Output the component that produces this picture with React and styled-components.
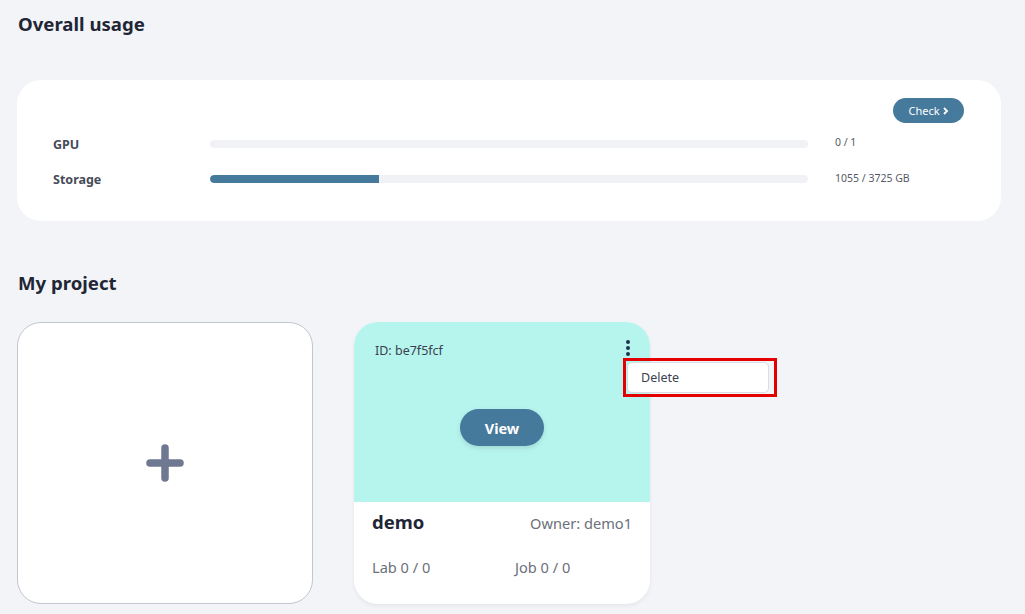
import React from "react";
import styled, { createGlobalStyle } from "styled-components";

const GlobalStyle = createGlobalStyle`
  html, body {
    margin: 0;
    padding: 0;
    background: #f3f4f8;
    font-family: "Noto Sans", "DejaVu Sans", sans-serif;
    color: #232b3a;
  }
`;

const Page = styled.div`
  width: 1025px;
  height: 614px;
  overflow: hidden;
  padding: 0 24px 0 17px;
  box-sizing: border-box;
`;

const SectionTitle = styled.h2`
  margin: 0;
  height: ${({ h }) => h}px;
  padding-top: ${({ top }) => top}px;
  box-sizing: border-box;
  font-size: 18.6px;
  font-weight: 700;
  line-height: 24px;
  color: #1f2636;
  padding-left: 1px;
`;

const UsageCard = styled.section`
  background: #fff;
  border-radius: 24px;
  height: 141px;
  padding: 18px 37px 0 36px;
  box-sizing: border-box;
  display: flex;
  flex-direction: column;
`;

const CheckRow = styled.div`
  display: flex;
  justify-content: flex-end;
  margin-bottom: 12px;
`;

const CheckButton = styled.button`
  height: 25px;
  width: 71px;
  border: none;
  border-radius: 13px;
  background: #467a9c;
  color: #fff;
  font-family: inherit;
  font-size: 11px;
  display: flex;
  align-items: center;
  justify-content: center;
  gap: 2px;
  padding: 0;
`;

const UsageRow = styled.div`
  display: grid;
  grid-template-columns: 130px 598px 1fr;
  column-gap: 27px;
  align-items: center;
  height: 18px;
  margin-bottom: 17px;
`;

const UsageLabel = styled.div`
  font-size: 12.5px;
  font-weight: 700;
  color: #464c57;
`;

const Track = styled.div`
  height: 8px;
  border-radius: 4px;
  background: #f1f2f6;
  overflow: hidden;
`;

const Fill = styled.div`
  height: 100%;
  background: #467a9c;
  border-radius: 4px 0 0 4px;
`;

const UsageValue = styled.div`
  font-size: 10.5px;
  color: #555b66;
  margin-top: ${({ up }) => (up ? -4 : -2)}px;
`;

const CardGrid = styled.div`
  display: flex;
  gap: 41px;
`;

const AddCard = styled.div`
  width: 296px;
  height: 282px;
  background: #fff;
  border: 1px solid #c3c6ce;
  border-radius: 24px;
  box-sizing: border-box;
  display: flex;
  align-items: center;
  justify-content: center;
`;

const ProjectCard = styled.div`
  position: relative;
  width: 296px;
  height: 282px;
  border-radius: 24px;
  background: #fff;
  box-shadow: 0 2px 4px rgba(0, 0, 0, 0.06);
  display: flex;
  flex-direction: column;
`;

const CardTop = styled.div`
  height: 180px;
  background: #b6f5ee;
  border-radius: 24px 24px 0 0;
  display: flex;
  flex-direction: column;
  padding: 18px 18px 0 21px;
  box-sizing: border-box;
`;

const TopRow = styled.div`
  display: flex;
  justify-content: space-between;
  align-items: flex-start;
`;

const ProjectId = styled.span`
  font-size: 12.5px;
  color: #3b4150;
  margin-top: 2px;
`;

const MoreButton = styled.div`
  width: 8px;
  display: flex;
  flex-direction: column;
  align-items: center;
  gap: 2px;
  span {
    width: 4px;
    height: 4px;
    border-radius: 50%;
    background: #1f3550;
  }
`;

const ViewButton = styled.button`
  align-self: center;
  margin-top: 50px;
  width: 84px;
  height: 37px;
  border: none;
  border-radius: 19px;
  background: #467a9c;
  color: #fff;
  font-family: inherit;
  font-weight: 700;
  font-size: 14.5px;
  box-shadow: 0 2px 5px rgba(0, 0, 0, 0.12);
  margin-left: -3px;
`;

const CardBottom = styled.div`
  flex: 1;
  padding: 7px 18px 0 18px;
  display: flex;
  flex-direction: column;
`;

const NameRow = styled.div`
  display: flex;
  justify-content: space-between;
  align-items: baseline;
`;

const ProjectName = styled.span`
  font-size: 18.5px;
  font-weight: 700;
  color: #1f2636;
`;

const Owner = styled.span`
  font-size: 14.6px;
  color: #6b707a;
`;

const StatsRow = styled.div`
  display: grid;
  grid-template-columns: 143px 1fr;
  margin-top: 23px;
  font-size: 14.6px;
  color: #6b707a;
`;

const Dropdown = styled.div`
  position: absolute;
  left: 269px;
  top: 36px;
  width: 154px;
  height: 39px;
  border: 3px solid #e40000;
  box-sizing: border-box;
  display: flex;
  align-items: center;
  padding: 0 0 0 1px;
`;

const MenuItem = styled.div`
  width: 142px;
  height: 31px;
  background: #fff;
  border: 1px solid #d9dce2;
  border-radius: 5px;
  box-sizing: border-box;
  font-size: 12.5px;
  color: #3b4150;
  display: flex;
  align-items: center;
  padding-left: 13px;
`;

const Plus = () => (
  <svg width="38" height="38" viewBox="0 0 38 38">
    <path d="M19 4v30M4 19h30" stroke="#6e7891" strokeWidth="7.5" strokeLinecap="round" />
  </svg>
);

export default function App() {
  const storage = { used: 1055, total: 3725 };
  return (
    <>
      <GlobalStyle />
      <Page>
        <SectionTitle h={80} top={12}>Overall usage</SectionTitle>
        <UsageCard>
          <CheckRow>
            <CheckButton>
              Check
              <svg width="7" height="8" viewBox="0 0 7 8">
                <path d="M2 1l3 3-3 3" stroke="#fff" strokeWidth="1.8" fill="none" />
              </svg>
            </CheckButton>
          </CheckRow>
          <UsageRow>
            <UsageLabel>GPU</UsageLabel>
            <Track />
            <UsageValue up>0 / 1</UsageValue>
          </UsageRow>
          <UsageRow>
            <UsageLabel>Storage</UsageLabel>
            <Track>
              <Fill style={{ width: `${(storage.used / storage.total) * 100}%` }} />
            </Track>
            <UsageValue>
              {storage.used} / {storage.total} GB
            </UsageValue>
          </UsageRow>
        </UsageCard>
        <SectionTitle h={101} top={50}>My project</SectionTitle>
        <CardGrid>
          <AddCard>
            <Plus />
          </AddCard>
          <ProjectCard>
            <CardTop>
              <TopRow>
                <ProjectId>ID: be7f5fcf</ProjectId>
                <MoreButton>
                  <span />
                  <span />
                  <span />
                </MoreButton>
              </TopRow>
              <ViewButton>View</ViewButton>
            </CardTop>
            <CardBottom>
              <NameRow>
                <ProjectName>demo</ProjectName>
                <Owner>Owner: demo1</Owner>
              </NameRow>
              <StatsRow>
                <span>Lab 0 / 0</span>
                <span>Job 0 / 0</span>
              </StatsRow>
            </CardBottom>
            <Dropdown>
              <MenuItem>Delete</MenuItem>
            </Dropdown>
          </ProjectCard>
        </CardGrid>
      </Page>
    </>
  );
}
